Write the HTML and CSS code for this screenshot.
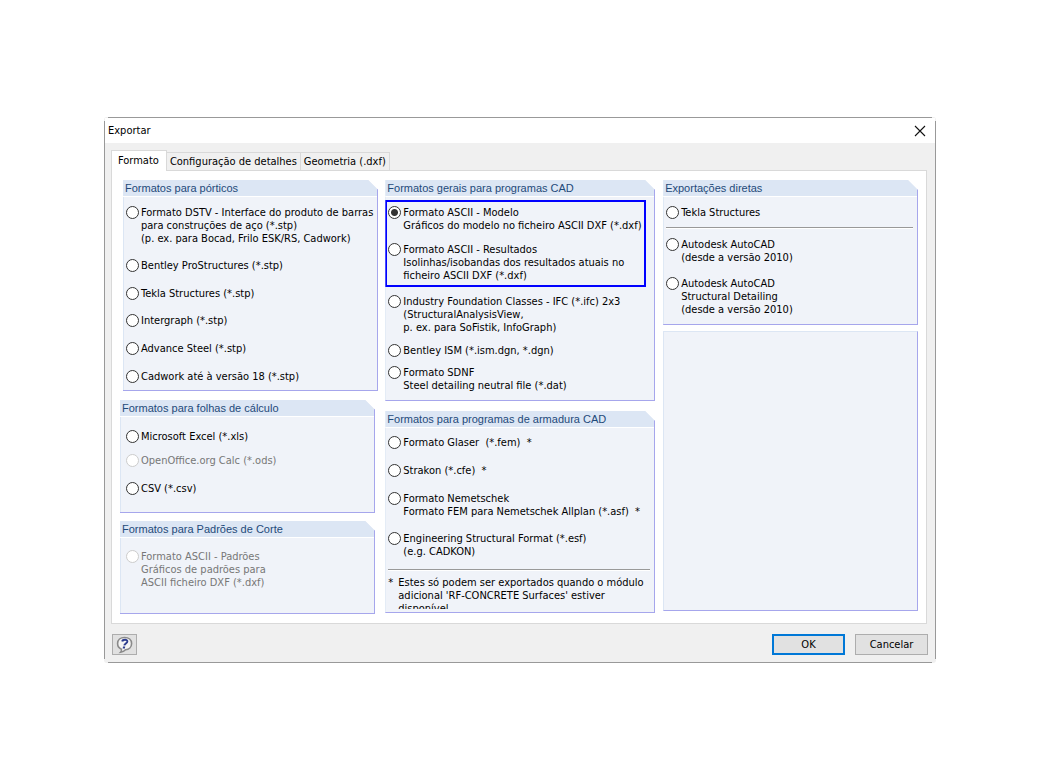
FILE: index.html
```html
<!DOCTYPE html>
<html lang="pt">
<head>
<meta charset="utf-8">
<title>Exportar</title>
<link rel="stylesheet" href="styles.css">
</head>
<body>
<main class="dialog">
  <header class="titlebar">
    <h1 class="title">Exportar</h1>
    <button class="close" type="button" aria-label="Fechar">
      <svg width="12" height="12" viewBox="0 0 12 12"><path d="M1 1L11 11M11 1L1 11" stroke="#111" stroke-width="1.1" fill="none"/></svg>
    </button>
  </header>
  <nav class="tabs">
    <button class="tab tab-active" type="button">Formato</button>
    <button class="tab" type="button">Configuração de detalhes</button>
    <button class="tab" type="button">Geometria (.dxf)</button>
  </nav>
  <form class="panel" id="export">
    <div class="column">
      <section class="group group-frames">
        <h2 class="group-title">Formatos para pórticos</h2>
        <div class="group-body">
          <label class="option"><input type="radio" name="format"><span>Formato DSTV - Interface do produto de barras<br>para construções de aço (*.stp)<br>(p. ex. para Bocad, Frilo ESK/RS, Cadwork)</span></label>
          <label class="option option-near"><input type="radio" name="format"><span>Bentley ProStructures (*.stp)</span></label>
          <label class="option"><input type="radio" name="format"><span>Tekla Structures (*.stp)</span></label>
          <label class="option option-near"><input type="radio" name="format"><span>Intergraph (*.stp)</span></label>
          <label class="option"><input type="radio" name="format"><span>Advance Steel (*.stp)</span></label>
          <label class="option"><input type="radio" name="format"><span>Cadwork até à versão 18 (*.stp)</span></label>
        </div>
      </section>
      <section class="group group-sheets">
        <h2 class="group-title">Formatos para folhas de cálculo</h2>
        <div class="group-body">
          <label class="option"><input type="radio" name="format"><span>Microsoft Excel (*.xls)</span></label>
          <label class="option option-close"><input type="radio" name="format" disabled><span>OpenOffice.org Calc (*.ods)</span></label>
          <label class="option"><input type="radio" name="format"><span>CSV (*.csv)</span></label>
        </div>
      </section>
      <section class="group group-cutting">
        <h2 class="group-title">Formatos para Padrões de Corte</h2>
        <div class="group-body">
          <label class="option"><input type="radio" name="format" disabled><span>Formato ASCII - Padrões<br>Gráficos de padrões para<br>ASCII ficheiro DXF (*.dxf)</span></label>
        </div>
      </section>
    </div>
    <div class="column">
      <section class="group group-cad">
        <h2 class="group-title">Formatos gerais para programas CAD</h2>
        <div class="group-body">
          <div class="highlight">
            <label class="option"><input type="radio" name="format" checked><span>Formato ASCII - Modelo<br>Gráficos do modelo no ficheiro ASCII DXF (*.dxf)</span></label>
            <label class="option"><input type="radio" name="format"><span>Formato ASCII - Resultados<br>Isolinhas/isobandas dos resultados atuais no<br>ficheiro ASCII DXF (*.dxf)</span></label>
          </div>
          <label class="option"><input type="radio" name="format"><span>Industry Foundation Classes - IFC (*.ifc) 2x3<br>(StructuralAnalysisView,<br>p. ex. para SoFistik, InfoGraph)</span></label>
          <label class="option"><input type="radio" name="format"><span>Bentley ISM (*.ism.dgn, *.dgn)</span></label>
          <label class="option option-near"><input type="radio" name="format"><span>Formato SDNF<br>Steel detailing neutral file (*.dat)</span></label>
        </div>
      </section>
      <section class="group group-rebar">
        <h2 class="group-title">Formatos para programas de armadura CAD</h2>
        <div class="group-body">
          <label class="option"><input type="radio" name="format"><span>Formato Glaser&nbsp; (*.fem)&nbsp; *</span></label>
          <label class="option"><input type="radio" name="format"><span>Strakon (*.cfe)&nbsp; *</span></label>
          <label class="option"><input type="radio" name="format"><span>Formato Nemetschek<br>Formato FEM para Nemetschek Allplan (*.asf)&nbsp; *</span></label>
          <label class="option option-near"><input type="radio" name="format"><span>Engineering Structural Format (*.esf)<br>(e.g. CADKON)</span></label>
          <hr class="rule">
          <p class="note"><span>*</span><span>Estes só podem ser exportados quando o módulo<br>adicional 'RF-CONCRETE Surfaces' estiver<br>disponível.</span></p>
        </div>
      </section>
    </div>
    <div class="column column-direct">
      <section class="group group-direct">
        <h2 class="group-title">Exportações diretas</h2>
        <div class="group-body">
          <label class="option"><input type="radio" name="format"><span>Tekla Structures</span></label>
          <hr class="rule">
          <label class="option"><input type="radio" name="format"><span>Autodesk AutoCAD<br>(desde a versão 2010)</span></label>
          <label class="option"><input type="radio" name="format"><span>Autodesk AutoCAD<br>Structural Detailing<br>(desde a versão 2010)</span></label>
        </div>
      </section>
      <section class="group-empty"></section>
    </div>
  </form>
  <footer class="footer">
    <button class="button button-help" type="button" aria-label="Ajuda">
      <svg width="18" height="18" viewBox="0 0 18 18">
        <path d="M8.500 1.500C12.800 1.500 15.600 4 15.600 7.500C15.600 11.200 12.800 13.500 9.500 13.800C8.500 15 7 16 4.600 16.200C5.500 15.300 5.700 14.300 5.400 13.200C3.100 12.200 1.600 10 1.600 7.500C1.600 4 4.500 1.500 8.500 1.500Z" fill="#f4f4f4" stroke="#8a8a8a" stroke-width="1.600"/>
        <path d="M6.200 5.500C6.800 3.300 11.600 3.100 11.300 5.700C11 7.500 8.700 7.500 8.300 9.400" fill="none" stroke="#2c3c8e" stroke-width="2"/>
        <path d="M7 10.600h2.200l-.3 2h-2.200z" fill="#2c3c8e"/>
      </svg>
    </button>
    <button class="button button-default" type="submit" form="export">OK</button>
    <button class="button" type="button">Cancelar</button>
  </footer>
</main>
</body>
</html>
```
FILE: styles.css
```css
* { box-sizing: border-box; }

body {
  margin: 0;
  min-height: 100vh;
  display: flex;
  align-items: center;
  justify-content: center;
  background: #fff;
  color: #000;
  font: 11px/13px "DejaVu Sans Condensed", "DejaVu Sans", sans-serif;
}

button { font: inherit; color: inherit; }

/* The frame lines stop short of the corners. */
.dialog {
  --line: linear-gradient(#999, #999);
  width: 80%;
  min-width: 780px;
  padding: 1px;
  border-radius: 3px;
  background:
    var(--line) 50% 0 / calc(100% - 8px) 1px no-repeat,
    var(--line) 50% 100% / calc(100% - 8px) 1px no-repeat,
    var(--line) 0 50% / 1px calc(100% - 8px) no-repeat,
    var(--line) 100% 50% / 1px calc(100% - 8px) no-repeat,
    #f0f0f0;
}

.titlebar {
  display: flex;
  align-items: center;
  justify-content: space-between;
  height: 25px;
  padding: 0 8px 0 3px;
  background: #fff;
}

.title { margin: 0; font-size: 11px; font-weight: 400; }

.close {
  display: flex;
  padding: 1px;
  border: 0;
  background: none;
}

.tabs {
  display: flex;
  align-items: flex-end;
  padding: 7px 6px 0;
}

.tab {
  height: 18px;
  margin-left: -1px;
  padding: 0 3px;
  border: 1px solid #d9d9d9;
  border-bottom: 0;
  background: #f0f0f0;
  white-space: nowrap;
}

.tab-active {
  position: relative;
  height: 21px;
  margin: 0 0 -1px;
  padding: 0 7px 1px 6px;
  background: #fff;
}

.panel {
  display: grid;
  grid-template-columns: 258fr 270fr 256fr;
  gap: 7px;
  margin: 0 8px 0 6px;
  padding: 9px 8px;
  border: 1px solid #d9d9d9;
  background: #fff;
}

.column { display: flex; flex-direction: column; }
.column-direct { padding-left: 1px; }

.group {
  background: #f0f3f9;
  border: 1px solid #a6a6ec;
  border-width: 0 1px 1px 0;
  clip-path: polygon(0 0, calc(100% - 10px) 0, 100% 10px, 100% 100%, 0 100%);
}

.group-title {
  margin: 0;
  height: 17px;
  padding-left: 2px;
  border-bottom: 1px solid #fff;
  background: #dce6f4;
  color: #1f4a7a;
  font: 11px/16px "Liberation Sans", Arial, sans-serif;
}

.group-body {
  display: flex;
  flex-direction: column;
  gap: 15px;
  padding: 9px 4px 7px 2px;
  border-left: 1px solid #dce6f4;
}

.option {
  display: flex;
  align-items: flex-start;
  gap: 2px;
  white-space: nowrap;
}

.option input {
  appearance: none;
  flex: none;
  width: 13px;
  height: 13px;
  margin: 0;
  border: 1px solid #333;
  border-radius: 50%;
  background: #fff;
}

.option input:checked { background: radial-gradient(circle, #333 3px, #fff 4px); }
.option input:disabled { border-color: #ccc; }
.option:has(input:disabled) { color: #777; }
.option-near { margin-top: -1px; }
.option-close { margin-top: -4px; }

.group-frames { margin-left: 3px; }
.group-sheets { margin: 9px 3px 8px 0; }
.group-sheets .group-body { padding: 13px 4px 17px 5px; }
.group-cutting { margin-right: 3px; }
.group-cutting .group-body { padding: 12px 4px 24px 5px; }

.group-cad .group-body { gap: 10px; padding: 3px 8px 8px 2px; }

.highlight {
  display: flex;
  flex-direction: column;
  gap: 11px;
  margin: 0 0 -2px -3px;
  padding: 4px 1px 3px;
  border: 2px solid #00f;
}

.group-rebar { margin-top: 10px; }
.group-rebar .group-body { padding: 8px 4px 3px 2px; }
.group-rebar .rule { margin: -4px 0 -10px; }

.rule {
  width: 100%;
  height: 2px;
  margin: 0;
  border: 0;
  border-top: 1px solid #999;
  background: #fff;
}

.note {
  display: flex;
  gap: 5px;
  height: 33px;
  margin: 0;
  overflow: hidden;
  white-space: nowrap;
}

.group-direct .group-body { gap: 13px; padding: 9px 4px 8px 2px; }
.group-direct .rule { margin: -5px 0 -4px; }

.group-empty {
  flex: 1;
  margin: 6px 0 3px;
  border: 1px solid #dce6f4;
  border-right-color: #a6a6ec;
  border-bottom-color: #a6a6ec;
  background: #f0f3f9;
}

.footer {
  display: flex;
  gap: 10px;
  padding: 10px 7px 7px;
}

.button {
  width: 73px;
  height: 21px;
  padding: 0;
  border: 1px solid #adadad;
  background: #e1e1e1;
}

.button-default { border: 2px solid #0078d7; }

.button-help {
  display: flex;
  align-items: center;
  justify-content: center;
  width: 25px;
  margin-right: auto;
}
```
